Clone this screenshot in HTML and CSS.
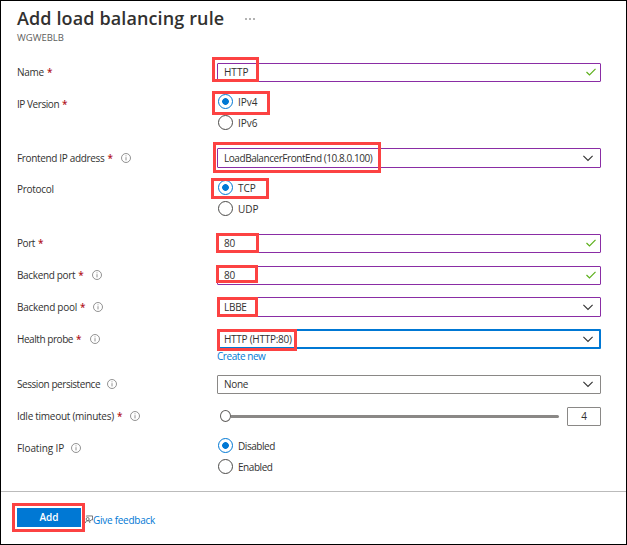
FILE: index.html
```html
<!DOCTYPE html>
<html lang="en">
<head>
<meta charset="utf-8">
<title>Add load balancing rule</title>
<link rel="stylesheet" href="styles.css">
</head>
<body>
<svg width="0" height="0" class="defs">
  <symbol id="info" viewBox="0 0 10 10"><circle cx="5" cy="5" r="4.5" fill="none" stroke="#777" stroke-width=".8"/><path d="M5 4.2V7.4M5 2.4V3.3" stroke="#777" stroke-width=".8"/></symbol>
  <symbol id="check" viewBox="0 0 10 8"><path d="M.5 4L3.5 7L9.5 .8" fill="none" stroke="#5db01c" stroke-width="1.2"/></symbol>
  <symbol id="chevron" viewBox="0 0 10 7"><path d="M.4 .8L5 5.5L9.6 .8" fill="none" stroke="#333" stroke-width="1.1"/></symbol>
</svg>
<main class="panel">
  <header class="header">
    <div class="heading"><h1>Add load balancing rule</h1><svg class="more" viewBox="0 0 10 2"><path d="M0 1H2M4 1H6M8 1H10" stroke="#666" stroke-width="1"/></svg></div>
    <div class="subtitle">WGWEBLB</div>
  </header>
  <form class="form">
    <div class="row name">
      <div class="label"><span>Name</span><b>*</b></div>
      <div class="field"><span class="wide">HTTP</span><svg class="check"><use href="#check"/></svg><i class="mark m-name"></i></div>
    </div>
    <div class="row version low">
      <div class="label"><span class="narrow">IP Version</span><b>*</b></div>
      <div class="radios">
        <div class="radio on"><i class="dot"></i><span class="wide">IPv4</span></div>
        <div class="radio"><i class="dot"></i><span class="wide">IPv6</span></div>
        <i class="mark m-version"></i>
      </div>
    </div>
    <div class="row frontend low">
      <div class="label"><span class="address">Frontend IP address</span><b>*</b><svg class="info"><use href="#info"/></svg></div>
      <div class="field tall"><span class="narrow">LoadBalancerFrontEnd (10.8.0.100)</span><svg class="chevron"><use href="#chevron"/></svg><i class="mark m-frontend"></i></div>
    </div>
    <div class="row protocol">
      <div class="label"><span>Protocol</span></div>
      <div class="radios">
        <div class="radio on"><i class="dot"></i><span class="wide">TCP</span></div>
        <div class="radio"><i class="dot"></i><span class="wide">UDP</span></div>
        <i class="mark m-protocol"></i>
      </div>
    </div>
    <div class="row port">
      <div class="label"><span class="narrow">Port</span><b>*</b></div>
      <div class="field"><span>80</span><svg class="check"><use href="#check"/></svg><i class="mark m-port"></i></div>
    </div>
    <div class="row bport">
      <div class="label"><span class="address">Backend port</span><b>*</b><svg class="info"><use href="#info"/></svg></div>
      <div class="field"><span>80</span><svg class="check"><use href="#check"/></svg><i class="mark m-bport"></i></div>
    </div>
    <div class="row pool low">
      <div class="label"><span>Backend pool</span><b>*</b><svg class="info"><use href="#info"/></svg></div>
      <div class="field tall"><span>LBBE</span><svg class="chevron"><use href="#chevron"/></svg><i class="mark m-pool"></i></div>
    </div>
    <div class="row probe low">
      <div class="label"><span class="narrow">Health probe</span><b>*</b><svg class="info"><use href="#info"/></svg></div>
      <div class="stack">
        <div class="field tall focus"><span>HTTP (HTTP:80)</span><svg class="chevron"><use href="#chevron"/></svg><i class="mark m-probe"></i></div>
        <a class="create narrow">Create new</a>
      </div>
    </div>
    <div class="row session">
      <div class="label"><span class="narrow">Session persistence</span><svg class="info near"><use href="#info"/></svg></div>
      <div class="field plain"><span>None</span><svg class="chevron"><use href="#chevron"/></svg></div>
    </div>
    <div class="row idle">
      <div class="label"><span>Idle timeout (minutes)</span><b>*</b><svg class="info"><use href="#info"/></svg></div>
      <div class="slider"><i class="thumb"></i><i class="track"></i></div>
      <div class="number">4</div>
    </div>
    <div class="row floating low">
      <div class="label"><span class="float">Floating IP</span><svg class="info near"><use href="#info"/></svg></div>
      <div class="radios">
        <div class="radio on"><i class="dot"></i><span class="narrow">Disabled</span></div>
        <div class="radio"><i class="dot"></i><span class="narrow">Enabled</span></div>
      </div>
    </div>
  </form>
  <footer class="footer">
    <div class="add">Add<i class="mark m-add"></i></div>
    <a class="feedback"><svg viewBox="0 0 9 9"><path d="M1.5 1V.5H8.5V5H7L5.5 6.5V5M.5 8.5C.5 6.5 1.5 6 3 6S5.5 6.5 5.5 8.5" fill="none" stroke="#444" stroke-width=".8"/><circle cx="3" cy="4" r="1.7" fill="none" stroke="#444" stroke-width=".8"/></svg><span>Give feedback</span></a>
  </footer>
</main>
</body>
</html>
```
FILE: styles.css
```css
* { box-sizing: border-box; }
body { margin: 0; background: #fff; font: 10px/20px "Open Sans", "Noto Sans", sans-serif; color: #323130; letter-spacing: -.27px; }
.wide { letter-spacing: 0; }
.narrow { letter-spacing: -.44px; }
.address { letter-spacing: -.34px; }
.float { letter-spacing: -.1px; }
.defs { position: absolute; }
.panel { width: 627px; height: 545px; border: 1px solid #000; display: flex; flex-direction: column; }
.header { height: 62px; padding: 5px 0 0 16px; flex: none; }
.heading { display: flex; align-items: center; height: 25px; }
h1 { margin: 0; width: 228px; padding-bottom: 2px; font-size: 18px; line-height: 24px; font-weight: 600; letter-spacing: .12px; white-space: nowrap; }
.more { width: 10px; height: 2px; }
.subtitle { font-size: 9.5px; line-height: 14px; letter-spacing: 0; color: #605e5c; }
.row { display: flex; align-items: flex-start; padding-left: 16px; }
.name { height: 31px; }
.version { height: 54px; }
.frontend { height: 32px; }
.protocol { height: 54px; }
.port { height: 32px; }
.bport { height: 31px; }
.pool { height: 32px; }
.probe { height: 46px; }
.session { height: 32px; }
.idle { height: 31px; }
.floating { height: 53px; }
.label { width: 200px; height: 20px; display: flex; white-space: nowrap; flex: none; line-height: 18px; }
.low .label { padding-top: 1px; }
.label b { margin-left: 3px; color: #b3171f; font-weight: 600; letter-spacing: 0; }
.info { width: 10px; height: 10px; margin: 4px 0 0 8px; }
.near { margin-left: 7px; }
.field { position: relative; width: 384px; height: 19px; border: 1px solid #8a2da5; border-radius: 1px; padding: 0 4px 0 6px; display: flex; align-items: center; justify-content: space-between; line-height: 17px; }
.tall { height: 20px; padding-right: 7px; }
.focus { border: 2px solid #0078d4; padding: 0 6px 0 5px; }
.plain { border-color: #8a8886; padding-right: 7px; }
.check { width: 10px; height: 8px; margin-bottom: 2px; }
.chevron { width: 10px; height: 7px; }
.radios { position: relative; width: 384px; }
.radio { display: flex; align-items: center; height: 15px; margin-bottom: 6px; padding-left: 1px; gap: 5px; }
.dot { width: 15px; height: 15px; border: 1px solid #4b4a48; border-radius: 50%; }
.on .dot { border-color: #0078d4; background: radial-gradient(circle, #0078d4 3px, #fff 3.7px); }
.create { display: block; line-height: 14px; color: #0078d4; }
.slider { width: 342px; height: 19px; padding-left: 3px; display: flex; align-items: center; }
.thumb { width: 11px; height: 12px; margin-bottom: 1px; border: 1px solid #605e5c; border-radius: 50%; }
.track { flex: 1; height: 3px; border-radius: 0 2px 2px 0; background: #8a8886; }
.number { width: 34px; height: 19px; margin-left: 8px; border: 1px solid #8a8886; border-radius: 1px; text-align: center; line-height: 17px; }
.footer { flex: 1; border-top: 1px solid #bbb; display: flex; padding: 16px 0 0 16px; }
.add { position: relative; width: 64px; height: 19px; background: #0078d4; color: #fff; font-weight: 600; text-align: center; line-height: 19px; letter-spacing: 0; }
.feedback { display: flex; align-items: flex-start; margin: 2px 0 0 4px; color: #0078d4; }
.feedback svg { width: 8px; height: 9px; margin-top: 5px; }
.mark { position: absolute; border: 3px solid #fc4242; }
.m-name { left: -6px; top: -7px; width: 47px; height: 25px; }
.m-version { left: -5px; top: -3px; width: 58px; height: 24px; }
.m-frontend { left: -5px; top: -7px; width: 168px; height: 31px; }
.m-protocol { left: -6px; top: -2px; width: 58px; height: 21px; }
.m-port { left: -2px; top: -2px; width: 43px; height: 20px; }
.m-bport { left: -2px; top: -2px; width: 42px; height: 18px; }
.m-pool { left: -1px; top: -1px; width: 41px; height: 20px; }
.m-probe { left: -2px; top: -2px; width: 80px; height: 22px; }
.m-add { left: -5px; top: -5px; width: 73px; height: 29px; }
```
